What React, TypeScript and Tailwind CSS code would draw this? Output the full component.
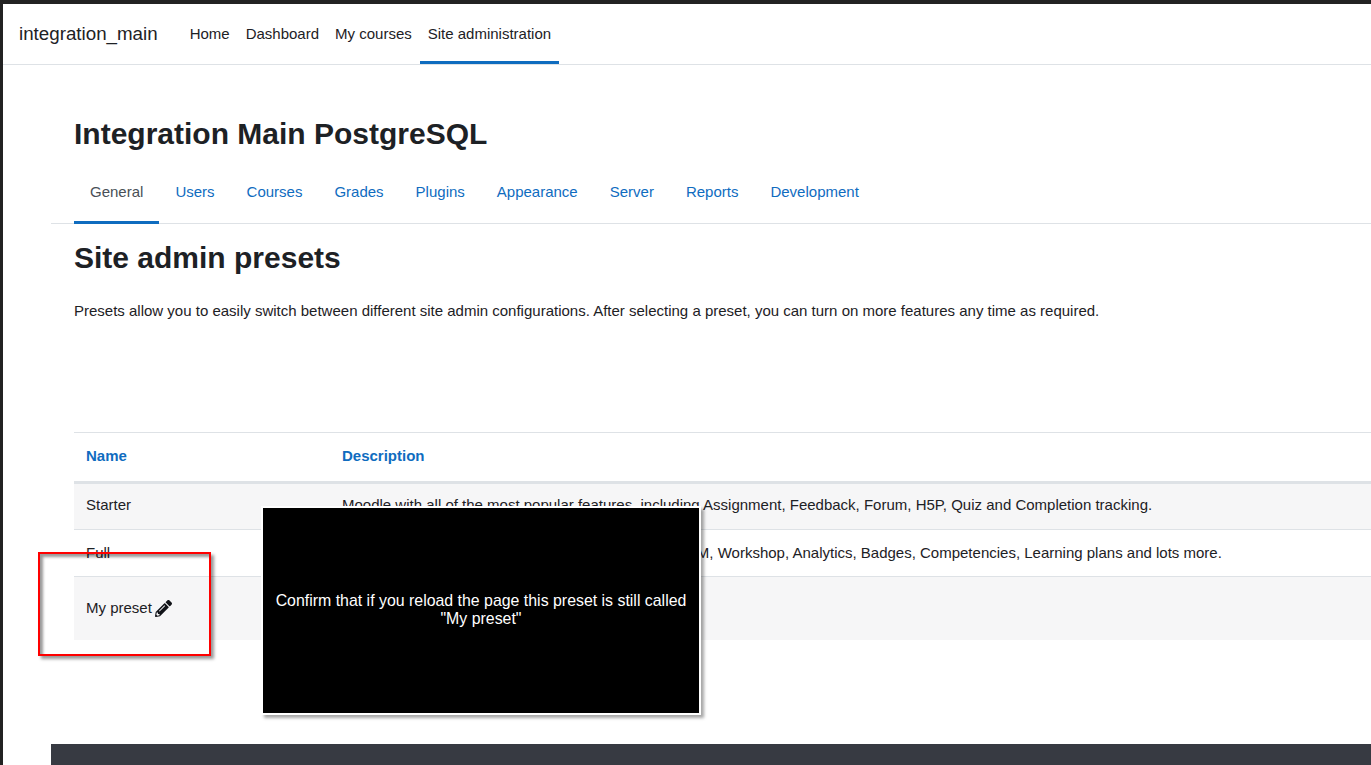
import { FaPencilAlt } from 'react-icons/fa';

const navLinks = ['Home', 'Dashboard', 'My courses', 'Site administration'];
const tabs = ['General', 'Users', 'Courses', 'Grades', 'Plugins', 'Appearance', 'Server', 'Reports', 'Development'];

export default function App() {
  return (
    <div className="relative h-[765px] w-[1371px] overflow-hidden border-t-[4px] border-l-[3px] border-[#222222] bg-white font-['Liberation_Sans',Arial,sans-serif] text-[15px] text-[#1d2125]">
      <nav className="flex h-[61px] items-stretch border-b border-[#dee2e6] pl-4">
        <a className="mr-6 flex items-center text-[18.75px]">integration_main</a>
        <ul className="flex">
          {navLinks.map((link, i) => (
            <li
              key={link}
              className={`flex items-center border-b-[3px] px-2 pt-[3px] ${
                i === 3 ? 'border-[#0f6cbf]' : 'border-transparent'
              }`}
            >
              {link}
            </li>
          ))}
        </ul>
      </nav>

      <div className="ml-[48px]">
        <h1 className="pt-[51px] pl-[23px] text-[30px] leading-[36px] font-bold">Integration Main PostgreSQL</h1>

        <ul className="mt-[17px] flex h-[55px] border-b border-[#dee2e6] pl-[23px]">
          {tabs.map((tab, i) => (
            <li
              key={tab}
              className={`flex h-[55px] items-center border-b-[3px] px-4 pb-[6px] ${
                i === 0 ? 'border-[#0f6cbf] text-[#495057]' : 'border-transparent text-[#0f6cbf]'
              }`}
            >
              {tab}
            </li>
          ))}
        </ul>

        <div className="pl-[23px]">
          <h2 className="mt-[16px] text-[30px] leading-[36px] font-bold">Site admin presets</h2>
          <p className="mt-[24px] leading-[22px]">
            Presets allow you to easily switch between different site admin configurations. After selecting a preset,
            you can turn on more features any time as required.
          </p>

          <table className="mt-[110px] w-full border-collapse text-left">
            <thead>
              <tr className="h-[50px] border-t border-b-[3px] border-[#dee2e6] text-[#0f6cbf]">
                <th className="w-[256px] px-3 pb-[2px] font-bold">Name</th>
                <th className="px-3 pb-[2px] font-bold">Description</th>
              </tr>
            </thead>
            <tbody>
              <tr className="h-[47px] border-b border-[#dee2e6] bg-[#f6f6f7]">
                <td className="px-3 pb-[3px]">Starter</td>
                <td className="px-3 pb-[3px]">
                  Moodle with all of the most popular features, including Assignment, Feedback, Forum, H5P, Quiz and
                  Completion tracking.
                </td>
              </tr>
              <tr className="h-[47px] border-b border-[#dee2e6]">
                <td className="px-3">Full</td>
                <td className="px-3">
                  All the Starter features plus External (LTI) tool, SCORM, Workshop, Analytics, Badges, Competencies,
                  Learning plans and lots more.
                </td>
              </tr>
              <tr className="h-[63px] bg-[#f6f6f7]">
                <td className="px-3">
                  <span className="flex items-center gap-[3px]">
                    My preset <FaPencilAlt className="h-[17px] w-[17px] text-[#111318]" />
                  </span>
                </td>
                <td className="px-3"></td>
              </tr>
            </tbody>
          </table>
        </div>

        <footer className="mt-[104px] h-[40px] bg-[#373a42]"></footer>
      </div>

      {/* overlays from the test instructions */}
      <div className="absolute top-[548px] left-[35px] h-[104px] w-[173px] border-2 border-[#ff0000] shadow-[3px_3px_3px_rgba(0,0,0,0.4),inset_3px_3px_3px_rgba(0,0,0,0.4)]"></div>
      <div className="absolute top-[502px] left-[258px] flex h-[209px] w-[440px] items-center justify-center border-2 border-white bg-black pr-[8px] pb-[1px] pl-2 text-center text-[15.9px] leading-[18px] text-white shadow-[3px_3px_3px_rgba(0,0,0,0.35)]">
        Confirm that if you reload the page this preset is still called "My preset"
      </div>
    </div>
  );
}
